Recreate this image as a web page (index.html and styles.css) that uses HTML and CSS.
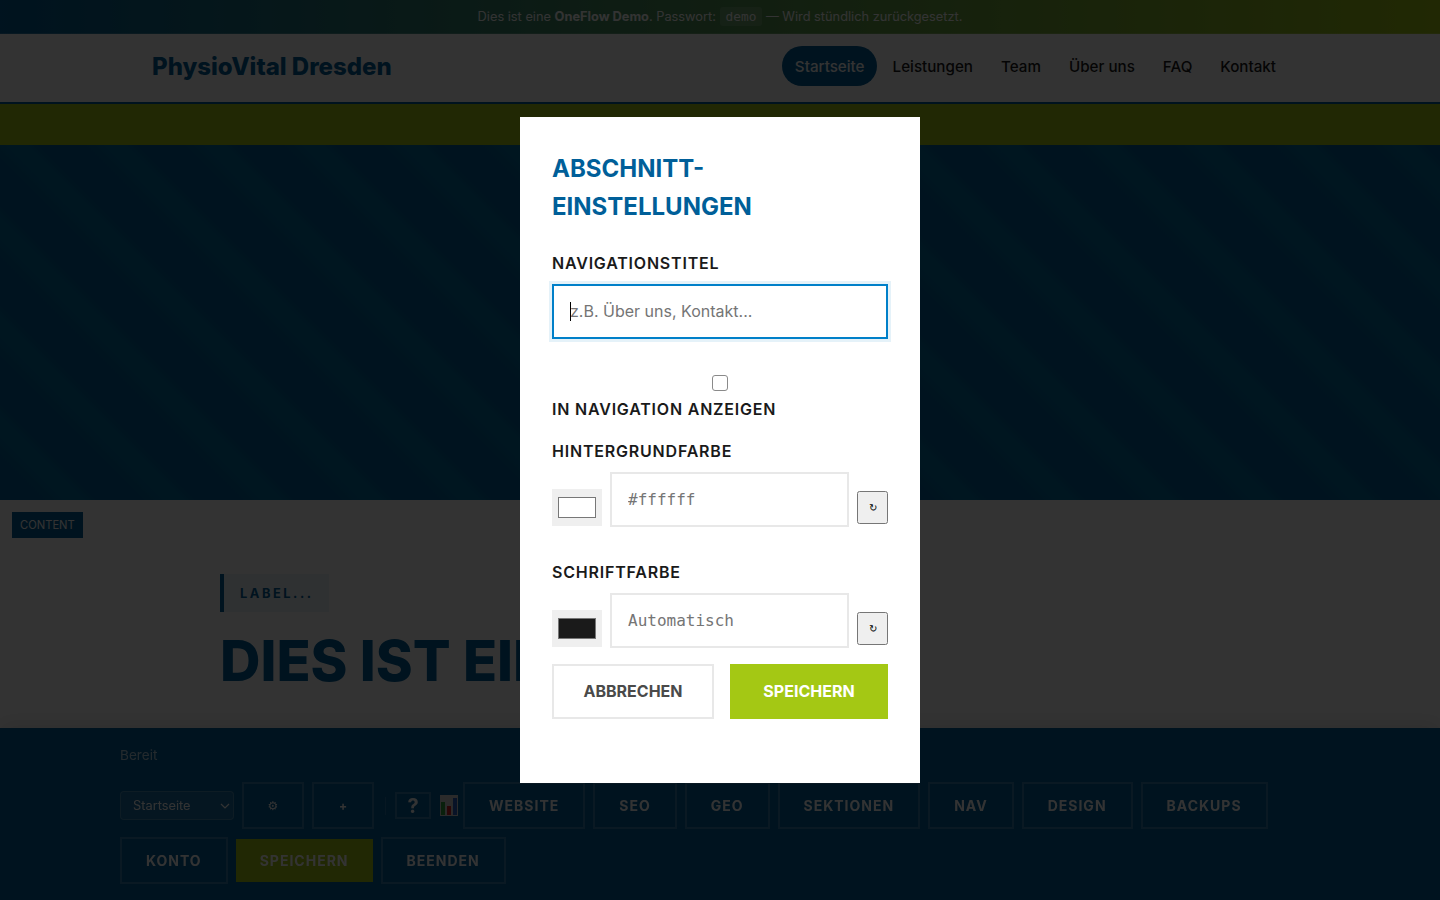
FILE: index.html
```html
<!DOCTYPE html>
<html lang="de">
<head>
<meta charset="UTF-8">
<meta name="viewport" content="width=device-width, initial-scale=1.0">
<title>PhysioVital Dresden</title>
<link rel="stylesheet" href="styles.css">
</head>

<body>
  <div class="demo-bar">
    <span>Dies ist eine <strong>OneFlow Demo</strong>. Passwort: <code>demo</code> — Wird stündlich zurückgesetzt.</span>
  </div>

  <header class="site-header">
    <div class="header-inner">
      <a class="logo" href="#">PhysioVital Dresden</a>
      <nav class="main-nav">
        <a class="active" href="#">Startseite</a>
        <a href="#">Leistungen</a>
        <a href="#">Team</a>
        <a href="#">Über uns</a>
        <a href="#">FAQ</a>
        <a href="#">Kontakt</a>
      </nav>
    </div>
  </header>

  <div class="accent-strip"></div>
  <section class="hero"></section>

  <section class="content-section">
    <span class="section-tag">CONTENT</span>
    <div class="section-inner">
      <div class="section-label">LABEL...</div>
      <h1>DIES IST EIN TITEL</h1>
    </div>
  </section>

  <div class="toolbar">
    <div class="toolbar-status">Bereit</div>
    <div class="toolbar-row">
      <select class="page-select">
        <option>Startseite</option>
      </select>
      <button class="tool-btn small-glyph">⚙</button>
      <button class="tool-btn small-glyph">+</button>
      <span class="tool-sep"></span>
      <span class="help-box">?</span>
      <svg class="chart-icon" viewBox="0 0 19 21" width="19" height="21">
        <rect x="1" width="18" height="21" fill="#d8d8d8"/>
        <rect x="2" y="7" width="4" height="13" fill="#2e9e3f"/>
        <rect x="8" y="11" width="4" height="9" fill="#d0262c"/>
        <rect x="14" y="3" width="4" height="17" fill="#2a5fc4"/>
      </svg>
      <button class="tool-btn">WEBSITE</button>
      <button class="tool-btn">SEO</button>
      <button class="tool-btn">GEO</button>
      <button class="tool-btn">SEKTIONEN</button>
      <button class="tool-btn">NAV</button>
      <button class="tool-btn">DESIGN</button>
      <button class="tool-btn">BACKUPS</button>
      <button class="tool-btn">KONTO</button>
      <button class="tool-btn tool-save">SPEICHERN</button>
      <button class="tool-btn">BEENDEN</button>
    </div>
  </div>

  <div class="overlay">
    <div class="modal">
      <h2>Abschnitt-Einstellungen</h2>

      <div class="form-group">
        <label for="navTitle">Navigationstitel</label>
        <div class="input-wrap">
          <input type="text" class="text-input" id="navTitle" placeholder="z.B. Über uns, Kontakt..." autofocus>
          <span class="caret"></span>
        </div>
      </div>

      <div class="form-group">
        <input type="checkbox" class="check" id="showNav">
        <label class="check-label" for="showNav">In Navigation anzeigen</label>
      </div>

      <div class="form-group">
        <label for="bgColor">Hintergrundfarbe</label>
        <div class="color-row">
          <input type="color" class="swatch" value="#ffffff">
          <input type="text" class="text-input mono" id="bgColor" placeholder="#ffffff">
          <button class="reset-btn">↻</button>
        </div>
      </div>

      <div class="form-group last">
        <label for="textColor">Schriftfarbe</label>
        <div class="color-row">
          <input type="color" class="swatch" value="#1a1a1a">
          <input type="text" class="text-input mono" id="textColor" placeholder="Automatisch">
          <button class="reset-btn">↻</button>
        </div>
      </div>

      <div class="modal-actions">
        <button class="btn-cancel">Abbrechen</button>
        <button class="btn-save">Speichern</button>
      </div>
    </div>
  </div>
</body>
</html>
```

FILE: styles.css
```css
* {
  box-sizing: border-box;
}

html, body {
  height: 100%;
}

body {
  margin: 0;
  overflow: hidden;
  font-family: Inter, "DejaVu Sans", sans-serif;
  line-height: 1.6;
  color: #1a1a1a;
  background: #fff;
}

.demo-bar {
  height: 34px;
  padding-top: 1px;
  display: flex;
  align-items: center;
  justify-content: center;
  background: linear-gradient(90deg, #005f99, #a4c814);
  border-bottom: 1px solid rgba(255, 255, 255, 0.15);
  color: #fff;
  font-size: 12.8px;
}

.demo-bar code {
  padding: 2px 6px;
  background: rgba(255, 255, 255, 0.15);
  border-radius: 3px;
  font-family: "DejaVu Sans Mono", monospace;
  font-size: 12.8px;
}

.site-header {
  height: 70px;
  background: #fff;
  border-bottom: 2px solid #005f99;
}

.header-inner {
  max-width: 1200px;
  height: 100%;
  margin: 0 auto;
  padding: 0 32px 4px;
  display: flex;
  align-items: center;
  justify-content: space-between;
}

.logo {
  margin-top: 2px;
  font-size: 24px;
  font-weight: 800;
  color: #005f99;
  text-decoration: none;
}

.main-nav {
  display: flex;
  gap: 4px;
}

.main-nav a {
  height: 40px;
  padding: 2px 12px 0;
  display: flex;
  align-items: center;
  border-radius: 20px;
  color: #1a1a1a;
  font-size: 15.2px;
  font-weight: 500;
  text-decoration: none;
}

.main-nav a.active {
  padding-left: 13px;
  background: #005f99;
  color: #fff;
}

.accent-strip {
  height: 41px;
  background: #a4c814;
}

.hero {
  height: 355px;
  background: repeating-linear-gradient(45deg, transparent 0 28px, rgba(0, 200, 200, 0.14) 46px 60px, transparent 70px), #005f99;
}

.content-section {
  position: relative;
  height: 228px;
  padding: 74px 220px 0;
  background: #fff;
}

.section-tag {
  position: absolute;
  top: 12px;
  left: 12px;
  padding: 1px 8px 0;
  height: 26px;
  display: flex;
  align-items: center;
  background: #005f99;
  color: #fff;
  font-size: 11.2px;
}

.section-label {
  display: inline-block;
  height: 38px;
  padding: 0 15px 0 16px;
  line-height: 40px;
  background: rgba(0, 95, 153, 0.08);
  border-left: 4px solid #005f99;
  color: #005f99;
  font-size: 12.8px;
  font-weight: 700;
  letter-spacing: 2.56px;
}

.section-inner h1 {
  margin: 16px 0 0;
  font-size: 56px;
  font-weight: 800;
  line-height: 1.2;
  color: #005f99;
}

.toolbar {
  position: fixed;
  left: 0;
  right: 0;
  bottom: 0;
  height: 172px;
  padding: 16px 120px 0;
  background: #005f99;
  box-shadow: 0 -4px 20px rgba(0, 0, 0, 0.1);
  color: rgba(255, 255, 255, 0.7);
}

.toolbar-status {
  margin-bottom: 16px;
  font-size: 13.6px;
  line-height: 22px;
}

.toolbar-row {
  max-width: 1200px;
  display: flex;
  flex-wrap: wrap;
  align-items: center;
  gap: 8px;
}

.page-select {
  width: 114px;
  height: 29px;
  padding: 0 8px 0 12px;
  appearance: none;
  background: rgba(255, 255, 255, 0.1) url("data:image/svg+xml,%3Csvg xmlns='http://www.w3.org/2000/svg' width='10' height='6'%3E%3Cpath d='M1 1l4 4 4-4' fill='none' stroke='%23fff' stroke-width='1.2'/%3E%3C/svg%3E") no-repeat right 3px center;
  border: 1px solid rgba(255, 255, 255, 0.2);
  border-radius: 4px;
  color: #fff;
  font-family: inherit;
  font-size: 12.8px;
}

.tool-btn {
  height: 47px;
  padding: 0 24px;
  background: transparent;
  border: 2px solid rgba(255, 255, 255, 0.2);
  color: #fff;
  font-family: inherit;
  font-size: 14px;
  font-weight: 700;
  letter-spacing: 1px;
}

.small-glyph {
  width: 62px;
  padding: 0;
  font-size: 12px;
  letter-spacing: 0;
}

.tool-save {
  height: 43px;
  padding: 0 24px;
  background: #a4c814;
  border: none;
}

.tool-sep {
  width: 1px;
  height: 18px;
  margin: 0 1px 0 3px;
  background: rgba(255, 255, 255, 0.15);
}

.help-box {
  width: 36px;
  height: 27px;
  display: flex;
  align-items: center;
  justify-content: center;
  border: 2px solid rgba(255, 255, 255, 0.2);
  color: #fff;
  font-size: 20px;
  font-weight: 700;
}

.chart-icon {
  margin-right: -3px;
}

.overlay {
  position: fixed;
  inset: 0;
  display: flex;
  align-items: center;
  justify-content: center;
  background: rgba(0, 0, 0, 0.8);
}

.modal {
  width: 400px;
  padding: 32.4px 32px 63.6px;
  background: #fff;
}

.modal h2 {
  margin: 0 0 24px;
  color: #005f99;
  font-size: 24px;
  font-weight: 700;
  line-height: 1.6;
  text-transform: uppercase;
}

.form-group {
  padding-bottom: 16px;
}

.form-group.last {
  padding-bottom: 0;
}

.form-group label {
  display: block;
  margin-bottom: 8px;
  font-size: 16px;
  font-weight: 600;
  letter-spacing: 0.8px;
  text-transform: uppercase;
}

.form-group.last label {
  padding-top: 1px;
  margin-bottom: 7px;
}

.form-group .check-label {
  margin-bottom: 0;
}

.input-wrap {
  position: relative;
}

.input-wrap .text-input {
  padding-bottom: 2px;
}

.caret {
  position: absolute;
  top: 18px;
  left: 18px;
  width: 1px;
  height: 19px;
  background: #000;
}

.text-input {
  display: block;
  width: 100%;
  height: 55px;
  margin-bottom: 16px;
  padding: 0 16px;
  background: #fff;
  border: 2px solid #e8e8e8;
  border-radius: 0;
  font-family: inherit;
  font-size: 16px;
  outline: none;
}

.text-input:focus {
  border-color: #0080c9;
  box-shadow: 0 0 0 3px rgba(0, 128, 201, 0.1);
}

.text-input.mono {
  flex: 1;
  min-width: 0;
  font-family: "DejaVu Sans Mono", monospace;
}

.check {
  display: block;
  width: 16px;
  height: 16px;
  margin: 4px auto 6px;
  appearance: none;
  background: #fff;
  border: 1.5px solid #8a8a8a;
  border-radius: 3px;
}

.color-row {
  display: flex;
  align-items: center;
  gap: 8px;
}

.swatch {
  width: 50px;
  height: 37px;
  flex: none;
  padding: 8px 6px;
  background: #efefef;
  border: none;
}

.swatch::-webkit-color-swatch-wrapper {
  padding: 0;
}

.reset-btn {
  width: 31px;
  height: 33px;
  flex: none;
  padding: 0;
  font-size: 10px;
}

.modal-actions {
  display: flex;
  gap: 16px;
}

.modal-actions button {
  height: 55px;
  border: 2px solid #e8e8e8;
  font-family: inherit;
  font-size: 16px;
  font-weight: 700;
  text-transform: uppercase;
}

.modal-actions .btn-cancel {
  flex: 0 0 162px;
  background: #fff;
  color: #4a4a4a;
}

.modal-actions .btn-save {
  flex: 1;
  background: #a4c814;
  border-color: #a4c814;
  color: #fff;
}
```
